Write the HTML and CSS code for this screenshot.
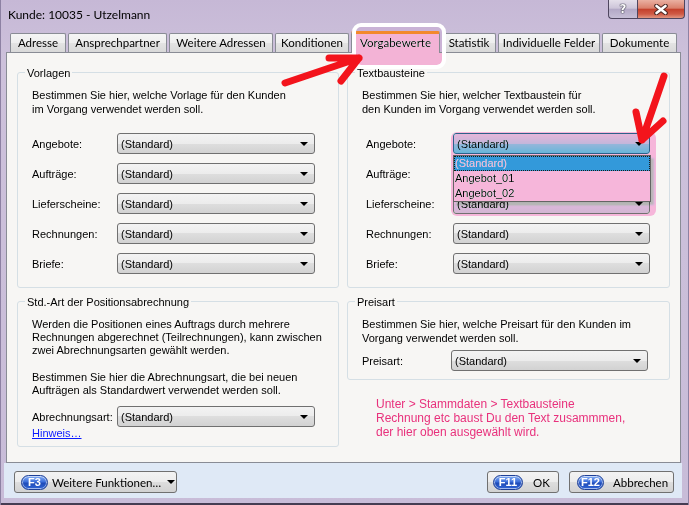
FILE: index.html
```html
<!DOCTYPE html>
<html lang="de">
<head>
<meta charset="utf-8">
<title>Kunde: 10035 - Utzelmann</title>
<link rel="stylesheet" href="styles.css">
</head>
<body>
<div class="window">
  <div class="titlebar">
    <span class="title">Kunde: 10035 - Utzelmann</span>
    <div class="caption">
      <span class="cap-btn cap-help">?</span>
      <span class="cap-btn cap-close">
        <svg width="14" height="11" viewBox="0 0 14 11">
          <path d="M2.5 2 L11.5 9 M11.5 2 L2.5 9" stroke="#4a2622" stroke-width="4.6" stroke-linecap="round"/>
          <path d="M2.5 2 L11.5 9 M11.5 2 L2.5 9" stroke="#fff" stroke-width="2.6" stroke-linecap="round"/>
        </svg>
      </span>
    </div>
  </div>

  <div class="tabs">
    <span class="tab tab-adresse">Adresse</span>
    <span class="tab tab-ansprech">Ansprechpartner</span>
    <span class="tab tab-weitere">Weitere Adressen</span>
    <span class="tab tab-kond">Konditionen</span>
    <span class="tab tab-active">Vorgabewerte</span>
    <span class="tab tab-stat">Statistik</span>
    <span class="tab tab-felder">Individuelle Felder</span>
    <span class="tab tab-doku">Dokumente</span>
  </div>

  <div class="panel">
    <div class="group group-top">
      <span class="legend">Vorlagen</span>
      <p class="desc">Bestimmen Sie hier, welche Vorlage für den Kunden<br>im Vorgang verwendet werden soll.</p>
      <div class="rows">
        <div class="row"><span class="label">Angebote:</span><span class="combo"><span>(Standard)</span><i class="caret"></i></span></div>
        <div class="row"><span class="label">Aufträge:</span><span class="combo"><span>(Standard)</span><i class="caret"></i></span></div>
        <div class="row"><span class="label">Lieferscheine:</span><span class="combo"><span>(Standard)</span><i class="caret"></i></span></div>
        <div class="row"><span class="label">Rechnungen:</span><span class="combo"><span>(Standard)</span><i class="caret"></i></span></div>
        <div class="row"><span class="label">Briefe:</span><span class="combo"><span>(Standard)</span><i class="caret"></i></span></div>
      </div>
    </div>

    <div class="group group-top group-right">
      <span class="legend">Textbausteine</span>
      <p class="desc">Bestimmen Sie hier, welcher Textbaustein für<br>den Kunden im Vorgang verwendet werden soll.</p>
      <div class="rows">
        <div class="row">
          <span class="label">Angebote:</span>
          <span class="combo combo-open"><span>(Standard)</span><i class="caret"></i>
            <span class="list">
              <span class="list-item list-item-selected">(Standard)</span>
              <span class="list-item">Angebot_01</span>
              <span class="list-item">Angebot_02</span>
            </span>
          </span>
        </div>
        <!-- this combo sits under the open list -->
        <div class="row"><span class="label">Aufträge:</span><span class="combo"><span></span><i class="caret"></i></span></div>
        <div class="row"><span class="label">Lieferscheine:</span><span class="combo"><span>(Standard)</span><i class="caret"></i></span></div>
        <div class="row"><span class="label">Rechnungen:</span><span class="combo"><span>(Standard)</span><i class="caret"></i></span></div>
        <div class="row"><span class="label">Briefe:</span><span class="combo"><span>(Standard)</span><i class="caret"></i></span></div>
      </div>
    </div>

    <div class="group group-billing">
      <span class="legend">Std.-Art der Positionsabrechnung</span>
      <p class="desc desc-compact">Werden die Positionen eines Auftrags durch mehrere<br>Rechnungen abgerechnet (Teilrechnungen), kann zwischen<br>zwei Abrechnungsarten gewählt werden.</p>
      <p class="desc desc-compact desc-second">Bestimmen Sie hier die Abrechnungsart, die bei neuen<br>Aufträgen als Standardwert verwendet werden soll.</p>
      <div class="row row-billing"><span class="label">Abrechnungsart:</span><span class="combo"><span>(Standard)</span><i class="caret"></i></span></div>
      <a class="link">Hinweis…</a>
    </div>

    <div class="column-price">
      <div class="group group-right group-price">
        <span class="legend">Preisart</span>
        <p class="desc">Bestimmen Sie hier, welche Preisart für den Kunden im<br>Vorgang verwendet werden soll.</p>
        <div class="row row-price"><span class="label">Preisart:</span><span class="combo"><span>(Standard)</span><i class="caret"></i></span></div>
      </div>
      <p class="note">Unter &gt; Stammdaten &gt; Textbausteine<br>Rechnung etc baust Du den Text zusammmen,<br>der hier oben ausgewählt wird.</p>
    </div>
  </div>

  <div class="footer">
    <span class="btn btn-more"><span class="key">F3</span>Weitere Funktionen…<i class="caret caret-btn"></i></span>
    <span class="btn btn-ok"><span class="key key-wide">F11</span>OK</span>
    <span class="btn btn-cancel"><span class="key">F12</span>Abbrechen</span>
  </div>

  <!-- marker highlights and arrows drawn over the dialog -->
  <div class="mark-tab-fill"></div>
  <div class="mark-tab-ring"></div>
  <div class="mark-combo"></div>
  <svg class="arrows" width="689" height="505" viewBox="0 0 689 505">
    <g stroke="#f3141c" stroke-width="7" stroke-linecap="round" stroke-linejoin="round" fill="none">
      <path d="M285 83 L359 58 M359 58 L329 58 M359 58 L341 81"/>
      <path d="M664 76 L642 140 M642 140 L636 112 M642 140 L663 121"/>
    </g>
  </svg>
</div>
</body>
</html>
```

FILE: styles.css
```css
body {
  margin: 0;
  background: #ffffff;
}

.window {
  position: relative;
  width: 689px;
  height: 505px;
  display: flex;
  flex-direction: column;
  overflow: hidden;
  background: linear-gradient(#c6b8d6, #cdc1db 60px, #c8bcd8);
  box-shadow: inset 1px 0 #8d81a3, inset -1px 0 #8d81a3, inset 0 -2px #453c52;
  font-family: "Liberation Sans", Arial, sans-serif;
  font-size: 11px;
  color: #000;
}

/* title bar */
.titlebar {
  flex: none;
  height: 33px;
  display: flex;
  align-items: flex-start;
  padding-left: 8px;
}

.title {
  font-family: Lato, "Liberation Sans", sans-serif;
  font-size: 12px;
  line-height: 29px;
}

.caption {
  margin-left: auto;
  margin-right: 4px;
  display: flex;
}

.cap-btn {
  height: 19px;
  box-sizing: border-box;
  border: 1px solid #4f465f;
  border-top: none;
  display: flex;
  align-items: center;
  justify-content: center;
}

.cap-help {
  width: 29px;
  border-right: none;
  border-radius: 0 0 0 4px;
  background: linear-gradient(#e4dfea, #cdc5d9 45%, #b3a9c6 52%, #c6bed6);
  color: #fff;
  font: bold 12px "DejaVu Sans", sans-serif;
  text-shadow: 0 0 1px #2a2a3a, 0 0 1px #2a2a3a, 0 0 1px #2a2a3a;
}

.cap-close {
  width: 48px;
  border-radius: 0 0 4px 0;
  background: linear-gradient(#eab0a2, #da806c 45%, #c4412d 52%, #cf5a45 78%, #e19682);
}

/* tab strip */
.tabs {
  flex: none;
  position: relative;
  z-index: 1;
  height: 19px;
  margin-left: 10px;
  display: flex;
  gap: 2px;
  align-items: flex-end;
}

.tab {
  height: 19px;
  box-sizing: border-box;
  border: 1px solid #898c95;
  border-bottom: none;
  border-radius: 2px 2px 0 0;
  background: linear-gradient(#f5f5f5, #eeeeee 50%, #e3e3e3 50%, #d9d9d9);
  font-family: Lato, "Liberation Sans", sans-serif;
  font-size: 11.5px;
  line-height: 18px;
  text-align: center;
  white-space: nowrap;
}

.tab-adresse { width: 56px; }
.tab-ansprech { width: 99px; }
.tab-weitere { width: 104px; }
.tab-kond { width: 74px; }
.tab-stat { width: 54px; }
.tab-felder { width: 102px; }
.tab-doku { width: 75px; }

.tab-active {
  width: 89px;
  height: 22px;
  margin-bottom: -1px;
  border-top: 3px solid #f4892c;
  background: #ffffff;
  line-height: 17px;
}

/* page body */
.panel {
  flex: none;
  height: 411px;
  box-sizing: border-box;
  margin: 0 8px 0 6px;
  border: 1px solid #898c95;
  background: #f7f6f4;
  padding: 19px 10px 0;
  display: grid;
  grid-template-columns: 322px 323px;
  grid-template-rows: 216px auto;
  column-gap: 8px;
  row-gap: 13px;
  align-items: start;
}

.group {
  box-sizing: border-box;
  border: 1px solid #d5dfe5;
  border-radius: 3px;
  padding: 0 14px;
}

.group-top {
  height: 216px;
}

.legend {
  display: table;
  margin: -6px 0 0 -7px;
  padding: 0 2px;
  line-height: 13px;
  background: #f7f6f4;
}

.desc {
  margin: 8px 0 0;
  line-height: 14px;
}

.desc-compact {
  margin-top: 9px;
  line-height: 13px;
}

.desc-second {
  margin-top: 14px;
}

.rows {
  margin-top: 17px;
  display: flex;
  flex-direction: column;
  gap: 9px;
}

.row {
  height: 21px;
  display: flex;
  align-items: center;
}

.label {
  flex: none;
  width: 85px;
}

.group-right .rows .row {
  padding-left: 4px;
}

.group-right .label {
  width: 87px;
}

.combo {
  position: relative;
  width: 198px;
  height: 21px;
  box-sizing: border-box;
  border: 1px solid #707070;
  border-radius: 3px;
  background: linear-gradient(#f3f3f3, #ececec 50%, #dedede 50%, #d2d2d2);
  display: flex;
  align-items: center;
  justify-content: space-between;
  padding: 0 6px 0 3px;
}

.group-right .combo {
  width: 197px;
}

.caret {
  width: 0;
  height: 0;
  border-left: 4px solid transparent;
  border-right: 4px solid transparent;
  border-top: 4px solid #000;
}

/* opened combo with its drop-down list */
.combo-open {
  border-color: #2c628b;
  background: linear-gradient(#e5f4fc, #c4e5f6 50%, #98d1ef 50%, #68b3db);
}

.list {
  position: absolute;
  left: -1px;
  top: 21px;
  z-index: 3;
  width: 198px;
  box-sizing: border-box;
  border: 1px solid #646464;
  background: #ffffff;
  box-shadow: 3px 3px 2px rgba(0, 0, 0, 0.25);
  display: flex;
  flex-direction: column;
}

.list-item {
  height: 15px;
  line-height: 15px;
  padding-left: 1px;
}

.list-item-selected {
  background: #3399ff;
  color: #ffffff;
  outline: 1px dotted #1a1a1a;
  outline-offset: -1px;
}

.row-billing {
  margin-top: 9px;
}

.row-price {
  margin-top: 5px;
}

.group-price .label {
  width: 89px;
}

.group-billing {
  padding-bottom: 6px;
}

.group-price {
  padding-bottom: 8px;
}

.link {
  display: block;
  line-height: 13px;
  color: #0b1bff;
  text-decoration: underline;
}

.note {
  margin: 17px 0 0 29px;
  font-size: 12px;
  line-height: 14px;
  color: #e8317c;
}

/* button bar */
.footer {
  flex: none;
  height: 35px;
  box-sizing: border-box;
  margin: 0 7px 0 4px;
  padding: 8px 8px 0 10px;
  background: #dfe9f6;
  display: flex;
  align-items: flex-start;
  gap: 10px;
}

.btn {
  height: 22px;
  box-sizing: border-box;
  border: 1px solid #707070;
  border-radius: 3px;
  background: linear-gradient(#f3f3f3, #ececec 50%, #dedede 50%, #d2d2d2);
  display: flex;
  align-items: center;
  font-family: Lato, "Liberation Sans", sans-serif;
  font-size: 11.5px;
  white-space: nowrap;
}

.btn-more {
  width: 163px;
  padding-left: 6px;
}

.btn-ok {
  width: 72px;
  margin-left: auto;
  padding-left: 5px;
}

.btn-cancel {
  width: 105px;
  padding-left: 7px;
}

.key {
  flex: none;
  width: 27px;
  height: 15px;
  box-sizing: border-box;
  margin-right: 4px;
  border: 1px solid #1d3f97;
  border-radius: 8px;
  background: linear-gradient(#86aef4, #3d6fdb 45%, #1f4bb8 55%, #3065d6);
  box-shadow: inset 0 0 0 1px rgba(255, 255, 255, 0.55);
  color: #ffffff;
  font: bold 11px "Liberation Sans", Arial, sans-serif;
  line-height: 13px;
  text-align: center;
}

.key-wide {
  width: 30px;
  margin-right: 10px;
}

.btn-cancel .key {
  margin-right: 9px;
}

.caret-btn {
  margin-left: 6px;
}

/* marker overlays */
.mark-tab-fill {
  position: absolute;
  left: 356px;
  top: 27px;
  width: 86px;
  height: 38px;
  z-index: 4;
  border-radius: 5px;
  background: #f3b3d6;
  mix-blend-mode: darken;
}

.mark-tab-ring {
  position: absolute;
  left: 352px;
  top: 23px;
  width: 94px;
  height: 46px;
  z-index: 5;
  box-sizing: border-box;
  border: 4px solid #ffffff;
  border-radius: 9px;
}

.mark-combo {
  position: absolute;
  left: 451px;
  top: 132px;
  width: 205px;
  height: 84px;
  z-index: 5;
  border-radius: 6px;
  background: #f6b6da;
  mix-blend-mode: darken;
}

.arrows {
  position: absolute;
  left: 0;
  top: 0;
  z-index: 6;
  pointer-events: none;
}
```
